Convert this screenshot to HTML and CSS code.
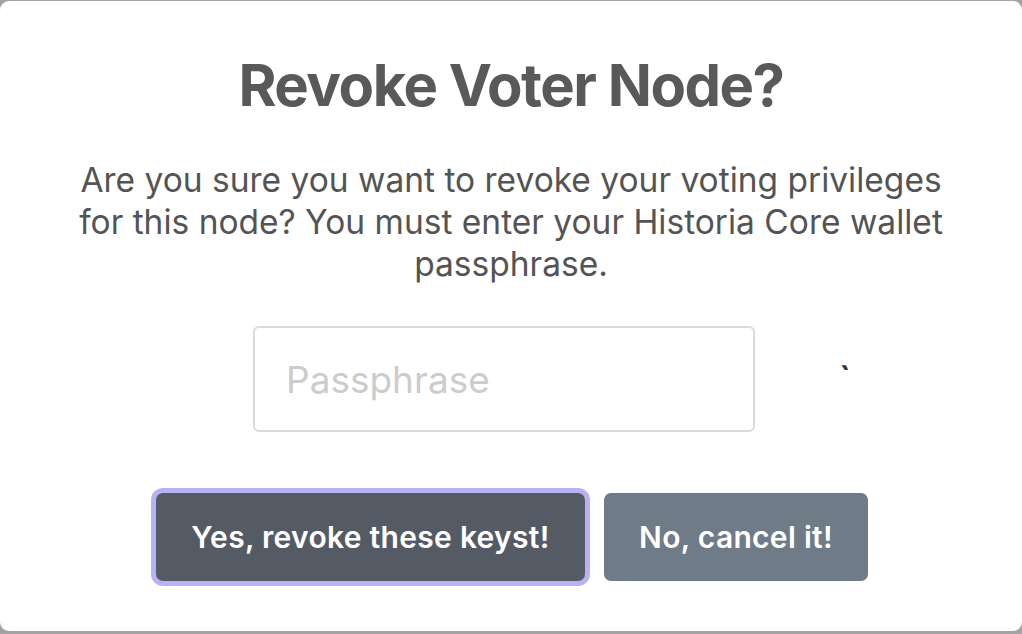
FILE: index.html
```html
<!DOCTYPE html>
<html lang="en">
<head>
<meta charset="utf-8">
<title>Revoke Voter Node?</title>
<link rel="stylesheet" href="styles.css">
</head>
<body>
<div class="backdrop">
  <div class="popup" role="dialog" aria-labelledby="popup-title">
    <h2 class="popup-title" id="popup-title">Revoke Voter Node?</h2>
    <div class="popup-text">Are you sure you want to revoke your voting privileges for this node? You must enter your Historia Core wallet passphrase.</div>
    <div class="input-row">
      <input class="popup-input" type="password" placeholder="Passphrase">
      <span class="stray">`</span>
    </div>
    <div class="actions">
      <button class="btn btn-confirm" type="button">Yes, revoke these keyst!</button>
      <button class="btn btn-cancel" type="button">No, cancel it!</button>
    </div>
  </div>
</div>
</body>
</html>
```
FILE: styles.css
```css
html, body {
  margin: 0;
  padding: 0;
  background: #a3a3a3;
}

.backdrop {
  width: 1022px;
  height: 634px;
  padding-top: 1px;
  box-sizing: border-box;
}

.popup {
  box-sizing: border-box;
  width: 1022px;
  height: 630px;
  background: #ffffff;
  border-radius: 9px;
  display: flex;
  flex-direction: column;
  align-items: center;
  font-family: Inter, "Liberation Sans", sans-serif;
}

.popup-title {
  margin: 49px 0 0;
  font-size: 58px;
  line-height: 70px;
  font-weight: 700;
  color: #595959;
  letter-spacing: -1.5px;
}

.popup-text {
  margin-top: 39px;
  width: 890px;
  text-align: center;
  font-size: 33.5px;
  line-height: 42px;
  color: #545454;
  letter-spacing: 0;
}

.input-row {
  align-self: stretch;
  display: flex;
  align-items: center;
  padding-left: 253px;
  gap: 84px;
  margin-top: 41px;
}

.popup-input {
  box-sizing: border-box;
  width: 502px;
  height: 106px;
  border: 2px solid #dadada;
  border-radius: 6px;
  padding: 0 31px;
  font-family: Inter, "Liberation Sans", sans-serif;
  font-size: 37px;
  color: #545454;
  background: #fff;
  outline: none;
}

.popup-input::placeholder {
  color: #cccccc;
}

.stray {
  font-size: 32px;
  font-weight: 700;
  color: #333;
  margin-top: -2px;
}

.actions {
  display: flex;
  align-items: center;
  gap: 19px;
  margin-top: 61px;
  margin-left: 2px;
}

.btn {
  box-sizing: border-box;
  height: 88px;
  border: none;
  border-radius: 7px;
  color: #ffffff;
  font-family: Inter, "Liberation Sans", sans-serif;
  font-size: 30px;
  font-weight: 600;
  letter-spacing: 0.3px;
  padding: 0 30px;
  cursor: pointer;
}

.btn-confirm {
  width: 429px;
  background: #545b64;
  box-shadow: 0 0 0 5px #b8b2f5;
}

.btn-cancel {
  width: 264px;
  background: #6f7b87;
}
```
